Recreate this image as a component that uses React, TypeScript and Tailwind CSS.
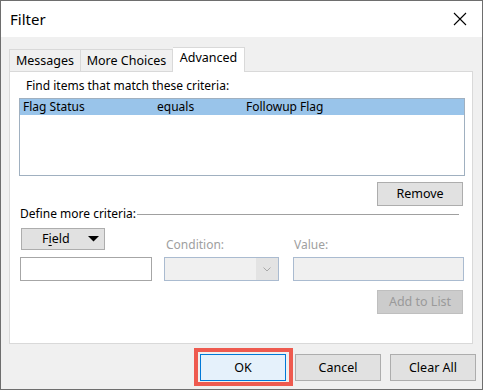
import React from "react";

const font = { fontFamily: '"Noto Sans", "Segoe UI", sans-serif' };

function Btn({
  children,
  className = "",
}: {
  children: React.ReactNode;
  className?: string;
}) {
  return (
    <div
      className={`flex items-center justify-center w-[86px] h-[24px] border border-[#adadad] bg-[#e1e1e1] text-black ${className}`}
    >
      {children}
    </div>
  );
}

export default function App() {
  return (
    <div
      className="w-[483px] h-[390px] flex flex-col border border-[#6e6e6e] bg-[#f0f0f0] text-[12px] leading-[16px] text-black overflow-hidden"
      style={font}
    >
      {/* Title bar */}
      <div className="h-[36px] bg-white flex items-center justify-between pl-[9px] pr-[14px] shrink-0">
        <span className="text-[15px] leading-[20px] text-black">Filter</span>
        <svg width="14" height="14" viewBox="0 0 14 14" className="mr-[1px]">
          <path d="M1 1 L13 13 M13 1 L1 13" stroke="#000" strokeWidth="1.1" />
        </svg>
      </div>

      {/* Body */}
      <div className="flex flex-col pl-[8px] pr-[8px]">
        {/* Tabs */}
        <div className="flex items-end mt-[9px] h-[25px]">
          <div className="h-[22px] w-[71px] flex items-center justify-center border border-r-0 border-b-0 border-[#d9d9d9] bg-[#f0f0f0] text-[12.5px]">
            Messages
          </div>
          <div className="h-[22px] w-[93px] flex items-center justify-center border border-b-0 border-[#d9d9d9] bg-[#f0f0f0] text-[12.5px]">
            More Choices
          </div>
          <div className="relative h-[25px] w-[72px] flex items-start pt-[2px] justify-center border border-l-0 border-b-0 border-[#d9d9d9] bg-white z-10 -mb-px text-[12.5px]">
            Advanced
          </div>
        </div>

        {/* Panel */}
        <div className="w-[464px] h-[273px] border border-[#d9d9d9] bg-white flex flex-col">
          <div className="ml-[16px] mt-[6px]">Find items that match these criteria:</div>

          <div className="ml-[9px] mt-[4px] w-[446px] h-[78px] border border-[#a0b0c0] bg-white">
            <div className="h-[16px] bg-[#99c4ea] flex items-center">
              <span className="ml-[3px] w-[134px]">Flag Status</span>
              <span className="w-[89px]">equals</span>
              <span>Followup Flag</span>
            </div>
          </div>

          <div className="flex justify-end mt-[6px] mr-[9px]">
            <Btn className="text-[12.5px]">Remove</Btn>
          </div>

          <div className="flex items-center ml-[10px] mr-[13px] h-[16px]">
            <span>Define more criteria:</span>
            <div className="flex-1 h-px bg-[#a0a0a0] ml-[1px]" />
          </div>

          <div className="flex items-end ml-[10px] mt-[6px]">
            <div className="flex flex-col w-[132px]">
              <div className="ml-[1px] w-[84px] h-[22px] border border-[#adadad] bg-[#e1e1e1] flex items-center text-[12.5px]">
                <span className="ml-[20px]">
                  F<span className="underline underline-offset-2">i</span>eld
                </span>
                <svg width="11" height="6" viewBox="0 0 11 6" className="ml-auto mr-[5px]">
                  <path d="M0 0 H11 L5.5 5.5 Z" fill="#000" />
                </svg>
              </div>
              <div className="mt-[7px] h-[24px] border border-[#a6a6a6] bg-white" />
            </div>
            <div className="flex flex-col w-[115px] ml-[12px]">
              <span className="ml-[2px] text-[#a0a0a0]">Condition:</span>
              <div className="mt-[4px] h-[24px] border border-[#aabbd0] bg-[#f0f0f0] flex justify-end">
                <div className="w-[22px] h-full bg-[#e3e3e3] flex items-center justify-center">
                  <svg width="8" height="5" viewBox="0 0 8 5">
                    <path d="M0.5 0.5 L4 4 L7.5 0.5" fill="none" stroke="#a8a8a8" strokeWidth="1" />
                  </svg>
                </div>
              </div>
            </div>
            <div className="flex flex-col w-[171px] ml-[14px]">
              <span className="ml-[1px] text-[#a0a0a0]">Value:</span>
              <div className="mt-[4px] h-[24px] border border-[#aabbd0] bg-[#f0f0f0]" />
            </div>
          </div>

          <div className="flex justify-end mt-[9px] mr-[9px]">
            <div className="flex items-center justify-center w-[86px] h-[24px] border border-[#bfbfbf] bg-[#cccccc] text-[#9a9a9a] text-[12.5px]">
              Add to List
            </div>
          </div>
        </div>

        {/* Bottom buttons */}
        <div className="flex justify-end gap-[9px] mt-[10px] mr-[-2px] text-[12.5px]">
          <div className="relative">
            <div className="flex items-center justify-center w-[86px] h-[27px] border border-[#0078d7] bg-[#e5f1fb]">
              OK
            </div>
            <div className="absolute -left-[6px] -top-[6px] w-[99px] h-[38px] border-[4px] border-[#ee5a4f] pointer-events-none" />
          </div>
          <Btn className="h-[27px]">Cancel</Btn>
          <Btn className="h-[27px]">Clear All</Btn>
        </div>
      </div>
    </div>
  );
}
